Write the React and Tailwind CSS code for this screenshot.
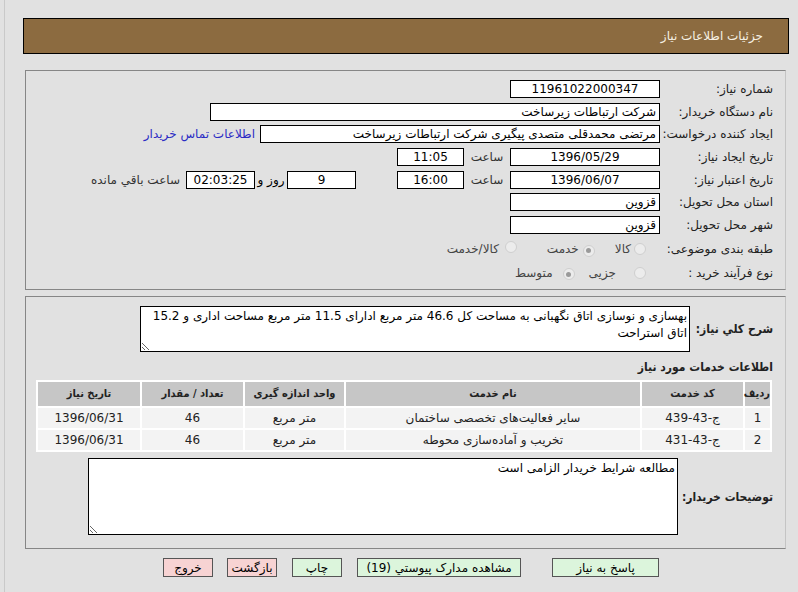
import React from "react";

function Radio({ checked }) {
  return (
    <span className="inline-flex items-center justify-center w-[12px] h-[12px] rounded-full border border-[#cfcfcf] bg-[#ececec] shrink-0">
      {checked && <span className="w-[5px] h-[5px] rounded-full bg-[#9a9a9a]" />}
    </span>
  );
}

function Box({ w, children, align = "center", className = "" }) {
  return (
    <div
      className={`h-[18px] border border-black bg-white flex items-center px-[3px] whitespace-nowrap overflow-hidden shrink-0 ${
        align === "center" ? "justify-center" : "justify-start"
      } ${className}`}
      style={{ width: w }}
    >
      {children}
    </div>
  );
}

function Row({ label, children }) {
  return (
    <div className="flex items-center h-[22.6px]">
      <div className="w-[113px] shrink-0 text-right text-[#222] whitespace-nowrap">{label}</div>
      {children}
    </div>
  );
}

export default function App() {
  const items = [
    { n: "1", code: "ج-43-439", name: "سایر فعالیت‌های تخصصی ساختمان", unit: "متر مربع", qty: "46", date: "1396/06/31" },
    { n: "2", code: "ج-43-431", name: "تخریب و آماده‌سازی محوطه", unit: "متر مربع", qty: "46", date: "1396/06/31" },
  ];

  return (
    <div className="w-[798px] h-[592px] bg-[#e1e1e1] overflow-hidden font-['DejaVu_Sans',sans-serif] text-[12px] text-black">
      <div className="ml-[4px] h-full border-l border-[#c9c9c9] pt-[18px] pl-[18px]">
        {/* header */}
        <div
          dir="rtl"
          className="w-[766px] h-[36px] border border-black bg-[#8c6b40] flex items-center pr-[25px] text-[#f6f1e4]"
        >
          جزئیات اطلاعات نیاز
        </div>

        {/* main info */}
        <div
          dir="rtl"
          className="ml-[2px] mt-[16px] w-[761px] h-[220px] border border-[#868686] border-r-[#c4c4c4] pr-[12px] pt-[7px]"
        >
          <Row label="شماره نیاز:">
            <Box w={150}>11961022000347</Box>
          </Row>
          <Row label="نام دستگاه خریدار:">
            <Box w={450} align="start">شرکت ارتباطات زیرساخت</Box>
          </Row>
          <Row label="ایجاد کننده درخواست:">
            <Box w={400} align="start">مرتضی محمدقلی متصدی پیگیری شرکت ارتباطات زیرساخت</Box>
            <span className="mr-[5px] text-[#2b2bc4] whitespace-nowrap">اطلاعات تماس خریدار</span>
          </Row>
          <Row label="تاریخ ایجاد نیاز:">
            <Box w={150}>1396/05/29</Box>
            <span className="w-[46px] text-center text-[#333]">ساعت</span>
            <Box w={67}>11:05</Box>
          </Row>
          <Row label="تاریخ اعتبار نیاز:">
            <Box w={150}>1396/06/07</Box>
            <span className="w-[46px] text-center text-[#333]">ساعت</span>
            <Box w={67}>16:00</Box>
            <span className="w-[41px]" />
            <Box w={69}>9</Box>
            <span className="w-[32px] text-center whitespace-nowrap">روز و</span>
            <Box w={69} className="bg-[#f1efd3]">02:03:25</Box>
            <span className="mr-[6px] text-[#333] whitespace-nowrap">ساعت باقي مانده</span>
          </Row>
          <Row label="استان محل تحویل:">
            <Box w={150} align="start">قزوین</Box>
          </Row>
          <Row label="شهر محل تحویل:">
            <Box w={150} align="start">قزوین</Box>
          </Row>
          <div className="flex items-center h-[24px] mt-[1px]">
            <div className="w-[113px] shrink-0 text-right text-[#222] whitespace-nowrap">طبقه بندی موضوعی:</div>
            <div className="flex items-center mr-[14px] text-[#444]">
              <Radio />
              <span className="mr-[3px]">کالا</span>
              <span className="mr-[20px]"><Radio checked /></span>
              <span className="mr-[4px]">خدمت</span>
              <span className="mr-[30px]"><Radio /></span>
              <span className="mr-[6px]">کالا/خدمت</span>
            </div>
          </div>
          <div className="flex items-center h-[23px]">
            <div className="w-[113px] shrink-0 text-right text-[#222] whitespace-nowrap">نوع فرآیند خرید :</div>
            <div className="flex items-center mr-[14px] text-[#444]">
              <Radio />
              <span className="mr-[18px]">جزیی</span>
              <span className="mr-[14px]"><Radio checked /></span>
              <span className="mr-[10px]">متوسط</span>
            </div>
          </div>
        </div>

        {/* description + services */}
        <div
          dir="rtl"
          className="ml-[2px] mt-[6px] w-[761px] h-[253px] border border-[#868686] border-r-[#c4c4c4] pr-[12px] pt-[9px]"
        >
          <div className="flex items-center">
            <div className="w-[83px] shrink-0 font-bold text-[12px] text-[#222] whitespace-nowrap font-['DejaVu_Sans_Condensed','DejaVu_Sans',sans-serif]">شرح کلي نیاز:</div>
            <textarea
              dir="rtl"
              readOnly
              defaultValue={"بهسازی و نوسازی اتاق نگهبانی به مساحت کل 46.6 متر مربع ادارای 11.5 متر مربع مساحت اداری و 15.2 اتاق استراحت"}
              className="w-[550px] h-[46px] border border-black bg-white px-[2px] py-[1px] text-[12px] leading-[17px] outline-none resize"
            />
          </div>

          <div className="mt-[7px] font-bold text-[12px] text-[#222] leading-[16px] font-['DejaVu_Sans_Condensed','DejaVu_Sans',sans-serif]">اطلاعات خدمات مورد نیاز</div>

          <table className="mt-[5px] mr-[1px] w-[736px] table-fixed border-separate border-spacing-[2px] bg-white text-center whitespace-nowrap">
            <thead>
              <tr className="h-[24px] text-[#222] text-[11px] font-['DejaVu_Sans_Condensed','DejaVu_Sans',sans-serif]">
                <th className="w-[25px] bg-[#c6c6c6] font-bold">ردیف</th>
                <th className="w-[101px] bg-[#c6c6c6] font-bold">کد خدمت</th>
                <th className="w-[294px] bg-[#c6c6c6] font-bold">نام خدمت</th>
                <th className="w-[99px] bg-[#c6c6c6] font-bold">واحد اندازه گیری</th>
                <th className="w-[101px] bg-[#c6c6c6] font-bold">تعداد / مقدار</th>
                <th className="bg-[#c6c6c6] font-bold">تاریخ نیاز</th>
              </tr>
            </thead>
            <tbody>
              {items.map((it) => (
                <tr key={it.n} className="h-[20px] text-[#222]">
                  <td className="bg-[#f3f3f3]">{it.n}</td>
                  <td className="bg-[#f3f3f3]">{it.code}</td>
                  <td className="bg-[#f3f3f3]">{it.name}</td>
                  <td className="bg-[#f3f3f3]">{it.unit}</td>
                  <td className="bg-[#f3f3f3]">{it.qty}</td>
                  <td className="bg-[#f3f3f3]">{it.date}</td>
                </tr>
              ))}
            </tbody>
          </table>

          <div className="flex items-center mt-[6px]">
            <div className="w-[95px] shrink-0 font-bold text-[12px] text-[#222] whitespace-nowrap font-['DejaVu_Sans_Condensed','DejaVu_Sans',sans-serif]">توضیحات خریدار:</div>
            <textarea
              dir="rtl"
              readOnly
              defaultValue="مطالعه شرایط خریدار الزامی است"
              className="w-[590px] h-[77px] border border-black bg-white px-[2px] py-[1px] text-[12px] leading-[17px] outline-none resize"
            />
          </div>
        </div>

        {/* buttons */}
        <div className="flex items-center mt-[9px] h-[19px]">
          <button className="ml-[140px] w-[50px] h-[19px] border border-[#555] bg-[#f7d3d3] text-[12px] leading-none">خروج</button>
          <button className="ml-[14px] w-[50px] h-[19px] border border-[#555] bg-[#f7d3d3] text-[12px] leading-none">بازگشت</button>
          <button className="ml-[15px] w-[50px] h-[19px] border border-[#555] bg-[#dcf5dc] text-[12px] leading-none">چاپ</button>
          <button className="ml-[15px] w-[164px] h-[19px] border border-[#555] bg-[#dcf5dc] text-[12px] leading-none">مشاهده مدارک پیوستي (19)</button>
          <button className="ml-[31px] w-[107px] h-[19px] border border-[#555] bg-[#dcf5dc] text-[12px] leading-none">پاسخ به نیاز</button>
        </div>
      </div>
    </div>
  );
}
